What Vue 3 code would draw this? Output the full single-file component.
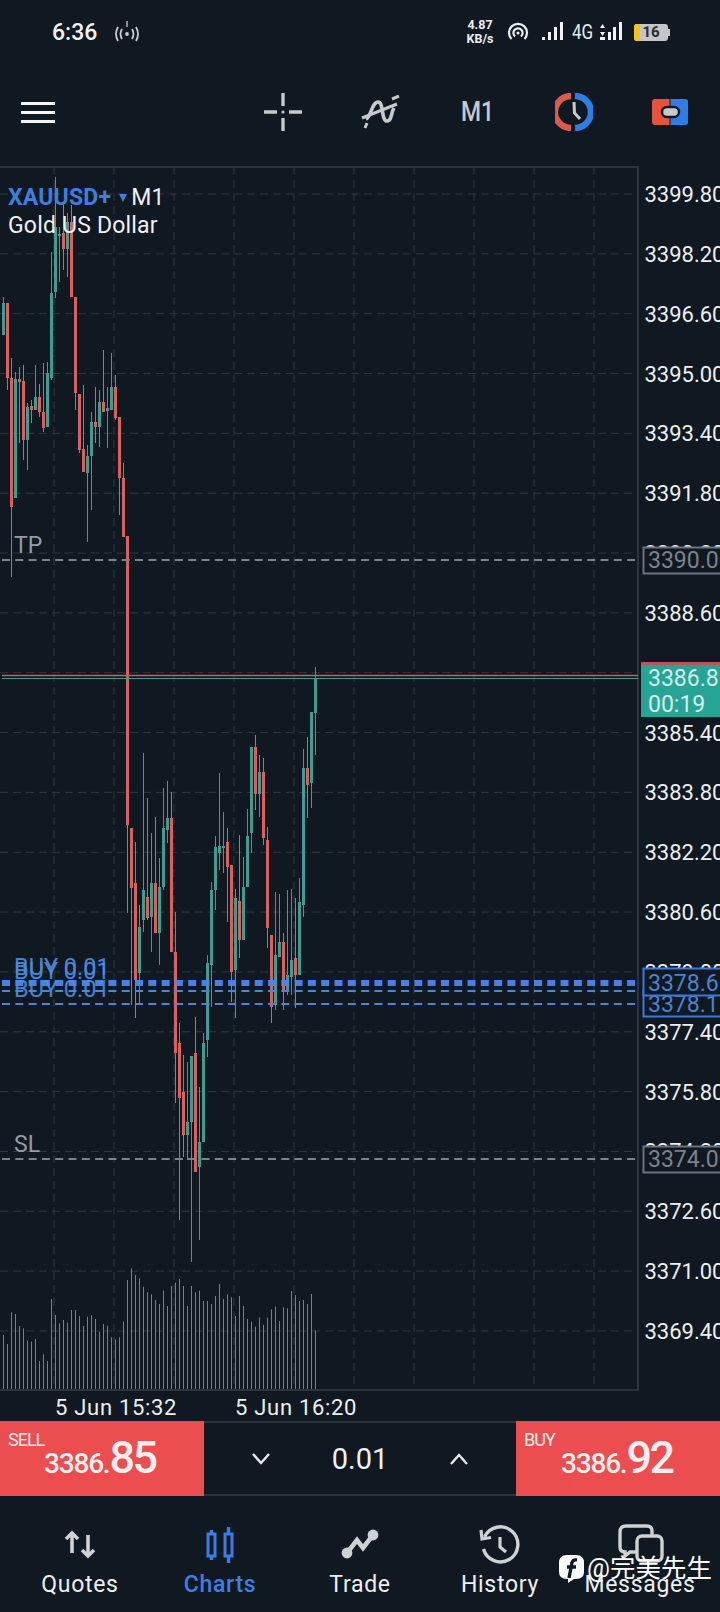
<script setup>
import { computed } from 'vue'

// candle: [bodyTop, bodyBottom, wickTop, wickBottom, up?]
const G = 1
const R = 0
const raw = [
  [303, 335, 297, 335, G], [303, 378, 303, 390, R], [378, 507, 358, 577, R], [379, 498, 372, 498, G],
  [379, 382, 367, 443, R], [381, 440, 365, 460, R], [407, 440, 403, 470, G], [406, 410, 400, 423, R],
  [397, 410, 365, 410, G], [397, 412, 384, 417, R], [412, 428, 363, 432, R], [373, 427, 362, 427, G],
  [293, 378, 252, 380, G], [227, 292, 177, 298, G], [234, 236, 227, 282, G], [233, 249, 203, 270, R],
  [222, 249, 213, 277, G], [222, 297, 205, 297, R], [297, 393, 297, 410, R], [394, 450, 394, 453, R],
  [449, 472, 385, 472, R], [456, 473, 445, 542, G], [422, 456, 412, 510, G], [422, 427, 387, 443, R],
  [402, 427, 390, 447, G], [402, 412, 350, 412, R], [408, 411, 387, 448, G], [387, 410, 353, 410, G],
  [387, 418, 375, 420, R], [417, 478, 417, 515, R], [478, 537, 463, 537, R], [536, 825, 536, 913, R],
  [828, 888, 828, 1005, R], [883, 980, 842, 1018, R], [927, 973, 905, 1005, G], [890, 920, 753, 932, G],
  [897, 918, 798, 920, R], [883, 917, 833, 952, G], [883, 933, 817, 933, R], [887, 933, 858, 965, G],
  [828, 887, 788, 890, G], [818, 830, 781, 843, G], [818, 952, 792, 952, R], [952, 1053, 912, 1103, R],
  [1043, 1098, 1023, 1220, R], [1092, 1135, 1055, 1157, R], [1122, 1135, 1062, 1160, G], [1056, 1122, 1056, 1262, G],
  [1053, 1172, 1017, 1172, R], [1142, 1167, 1087, 1240, G], [1043, 1142, 1033, 1142, G], [963, 1040, 955, 1057, G],
  [890, 965, 882, 1007, G], [847, 890, 836, 910, G], [846, 853, 773, 870, G], [846, 848, 812, 873, G],
  [842, 867, 828, 922, R], [865, 972, 865, 1002, R], [898, 970, 889, 1018, G], [901, 940, 835, 958, R],
  [887, 940, 857, 940, G], [836, 887, 809, 887, G], [747, 833, 747, 853, G], [747, 794, 735, 810, R],
  [772, 794, 755, 817, G], [772, 838, 758, 845, R], [840, 928, 827, 948, R], [935, 1007, 935, 1023, R],
  [955, 1005, 892, 1010, G], [942, 957, 894, 957, G], [942, 992, 933, 1010, R], [975, 990, 890, 995, G],
  [960, 977, 889, 995, G], [958, 975, 898, 1008, R], [902, 975, 878, 975, G], [768, 905, 749, 917, G],
  [768, 785, 737, 818, R], [712, 783, 712, 808, G], [678, 713, 667, 755, G],
]

const candles = computed(() =>
  raw.map((c, i) => ({
    x: 3 + i * 4,
    top: c[0],
    height: Math.max(c[1] - c[0], 2),
    wickTop: c[2],
    wickBottom: c[3],
    color: c[4] === G ? '#3f9c8f' : '#d9605f',
  })),
)

const volTops = [
  285, 312, 217, 222, 258, 265, 302, 305, 297, 363, 343, 363, 177, 225, 250, 240, 248, 210, 210, 228,
  258, 230, 226, 237, 275, 252, 257, 292, 298, 292, 245, 120, 85, 105, 115, 140, 157, 163, 180, 192,
  152, 198, 138, 128, 117, 138, 198, 138, 157, 152, 183, 183, 192, 168, 132, 177, 163, 172, 228, 168,
  198, 237, 245, 260, 232, 255, 233, 208, 200, 243, 202, 205, 153, 165, 183, 180, 192, 162, 272,
]
const volumes = computed(() => volTops.map((v, i) => ({ x: 3 + i * 4, y: 1240 + v / 3 })))

const gridX = Array.from({ length: 10 }, (_, i) => 54 + i * 60)
const gridY = Array.from({ length: 20 }, (_, i) => 194 + i * 59.84)

const priceLabels = computed(() =>
  gridY.map((y, i) => ({ y, text: (3399.8 - i * 1.6).toFixed(2) })),
)
</script>

<template>
  <div class="page">
    <div class="statusbar">
      <span class="clock">6:36</span>
      <svg class="hotspot" width="28" height="26" viewBox="0 0 28 26">
        <path d="M5 8 Q1 15 5 22M9 10 Q6 15 9 20M19 10 Q22 15 19 20M23 8 Q27 15 23 22" fill="none" stroke="#c9cdd1" stroke-width="1.8" />
        <circle cx="14" cy="15" r="1.9" fill="#c9cdd1" />
        <path d="M14 2 V8" stroke="#c9cdd1" stroke-width="1.3" />
      </svg>
      <div class="status-right">
        <div class="speed"><span>4.87</span><span>KB/s</span></div>
        <svg width="22" height="22" viewBox="0 0 22 22" class="wifi">
          <path d="M4.5 18 A9 9 0 1 1 17.5 18M8 15.5 A4.6 4.6 0 1 1 14 15.5" fill="none" stroke="#eceef0" stroke-width="2.2" />
          <circle cx="11" cy="12" r="1.6" fill="#eceef0" />
        </svg>
        <svg width="21" height="20" viewBox="0 0 21 20" class="sig1">
          <rect x="0" y="15" width="3" height="3" fill="#f2f3f4" />
          <rect x="6" y="10" width="3" height="8" fill="#f2f3f4" />
          <rect x="12" y="5" width="3" height="13" fill="#f2f3f4" />
          <rect x="18" y="0" width="3" height="18" fill="#f2f3f4" />
        </svg>
        <span class="net">4G</span>
        <svg width="22" height="20" viewBox="0 0 22 20" class="sig2">
          <path d="M0 6 L2.5 2 L5 6ZM0 10 L2.5 14 L5 10Z" fill="#f2f3f4" />
          <rect x="0" y="15" width="5" height="3" fill="#f2f3f4" />
          <rect x="8" y="10" width="3" height="8" fill="#f2f3f4" />
          <rect x="13" y="5" width="3" height="13" fill="#f2f3f4" />
          <rect x="19" y="0" width="3" height="18" fill="#f2f3f4" />
        </svg>
        <div class="battery"><i class="battery-low"></i><b>16</b></div>
      </div>
    </div>

    <div class="toolbar">
      <div class="burger"><i></i><i></i><i></i></div>
      <svg class="tool-cross" width="38" height="38" viewBox="0 0 38 38">
        <path d="M0 19H13M25 19H38M19 0V13M19 25V38" stroke="#c6cacd" stroke-width="3.4" fill="none" />
        <circle cx="19" cy="19" r="1.6" fill="#c6cacd" />
      </svg>
      <svg class="tool-ind" width="40" height="34" viewBox="0 0 40 34">
        <path d="M5 24 C10 22 11 7 17 7 C23 7 20 26 26 26 C31 26 30 17 33 13" fill="none" stroke="#c6cacd" stroke-width="3.6" />
        <path d="M1 23 L36 9M31 4 L38 1M6 28 L4 33" stroke="#c6cacd" stroke-width="3" fill="none" />
      </svg>
      <span class="tool-m1">M1</span>
      <svg class="tool-clock" width="38" height="38" viewBox="0 0 38 38">
        <path d="M16 3 A16 16 0 0 0 16 35" fill="none" stroke="#d95a4e" stroke-width="6.4" />
        <path d="M20 3 A16 16 0 0 1 20 35" fill="none" stroke="#2f7ee3" stroke-width="6.4" />
        <path d="M19 9 L19.5 20 L25 26" fill="none" stroke="#c6cacd" stroke-width="3" />
      </svg>
      <svg class="tool-mode" width="38" height="28" viewBox="0 0 38 28">
        <path d="M18.5 1H4 Q1 1 1 4V24 Q1 27 4 27H18.5Z" fill="#e5533f" />
        <path d="M19.5 1H34 Q37 1 37 4V24 Q37 27 34 27H19.5Z" fill="#2f7ee8" />
        <rect x="11" y="9" width="17" height="10" rx="5" fill="#c6cacd" stroke="#10181f" stroke-width="2.4" />
      </svg>
    </div>

    <div class="chart">
      <svg class="chart-svg" width="720" height="1261" viewBox="0 160 720 1261">
        <g class="grid">
          <line v-for="x in gridX" :key="'v' + x" :x1="x" :x2="x" y1="167" y2="1390" />
          <line v-for="y in gridY" :key="'h' + y" x1="0" x2="638" :y1="y" :y2="y" />
        </g>

        <line v-for="b in volumes" :key="'b' + b.x" class="vol" :x1="b.x + 0.5" :x2="b.x + 0.5" :y1="b.y" y2="1390" />

        <g v-for="c in candles" :key="c.x">
          <line :x1="c.x + 0.5" :x2="c.x + 0.5" :y1="c.wickTop" :y2="c.wickBottom" :stroke="c.color" stroke-width="1" />
          <rect :x="c.x - 1" :y="c.top" width="3" :height="c.height" :fill="c.color" />
        </g>

        <path class="frame" d="M0 167H638V1390H0" />

        <line class="price-red" x1="2" x2="638" y1="675.5" y2="675.5" />
        <line class="price-green" x1="2" x2="638" y1="678.5" y2="678.5" />

        <line class="level" x1="2" x2="638" y1="560" y2="560" />
        <line class="level" x1="2" x2="638" y1="1159" y2="1159" />
        <line class="order-thick" x1="2" x2="638" y1="983" y2="983" />
        <line class="order" x1="2" x2="638" y1="991" y2="991" />
        <line class="order" x1="2" x2="638" y1="1004" y2="1004" />

        <text class="tag" x="14" y="553">TP</text>
        <text class="tag" x="14" y="1152">SL</text>
        <text class="buy-tag" x="14" y="975">BUY 0.01</text>
        <text class="buy-tag" x="14" y="979">BUY 0.01</text>
        <text class="buy-tag" x="14" y="997">BUY 0.01</text>

        <text v-for="p in priceLabels" :key="p.text" class="axis" x="644.5" :y="p.y + 8">{{ p.text }}</text>

        <rect class="box-grey" x="643.5" y="547.5" width="90" height="26" />
        <text class="axis boxed grey" x="648" y="568">3390.00</text>

        <rect x="641" y="662" width="79" height="4" fill="#b25a5a" />
        <rect x="641" y="665" width="79" height="52" fill="#26a596" />
        <text class="axis boxed pale" x="648" y="686">3386.85</text>
        <text class="axis boxed pale" x="648" y="712">00:19</text>

        <rect class="box-blue" x="643.5" y="990.5" width="90" height="26" />
        <text class="axis boxed blue" x="648" y="1012">3378.15</text>
        <rect class="box-blue" x="643.5" y="968.5" width="90" height="27" />
        <text class="axis boxed blue" x="648" y="991">3378.65</text>

        <rect class="box-grey" x="643.5" y="1146.5" width="90" height="26" />
        <text class="axis boxed grey" x="648" y="1167">3374.00</text>

        <text class="time" x="55" y="1415">5 Jun 15:32</text>
        <text class="time" x="235" y="1415">5 Jun 16:20</text>
      </svg>

      <div class="legend">
        <div class="legend-row">
          <b class="symbol">XAUUSD+</b>
          <i class="caret"></i>
          <span>M1</span>
        </div>
        <div class="legend-row">Gold US Dollar</div>
      </div>
    </div>

    <div class="trade">
      <div class="side">
        <span class="side-label">SELL</span>
        <div class="side-price sell-price"><span class="small">3386.</span><span class="big">85</span></div>
      </div>
      <div class="lot">
        <svg width="20" height="14" viewBox="0 0 20 14"><path d="M2 2 L10 11 L18 2" fill="none" stroke="#e8eaec" stroke-width="2.4" /></svg>
        <span class="lot-value">0.01</span>
        <svg width="20" height="14" viewBox="0 0 20 14"><path d="M2 12 L10 3 L18 12" fill="none" stroke="#e8eaec" stroke-width="2.4" /></svg>
      </div>
      <div class="side">
        <span class="side-label">BUY</span>
        <div class="side-price buy-price"><span class="small">3386.</span><span class="big">92</span></div>
      </div>
    </div>

    <div class="nav">
      <div class="nav-item">
        <svg class="nav-icon" width="44" height="44" viewBox="0 0 44 44">
          <path d="M14 30V10M8 16L14 10L20 16M30 12V33M24 27L30 33L36 27" fill="none" stroke="#cfd2d5" stroke-width="3.6" />
        </svg>
        <span>Quotes</span>
      </div>
      <div class="nav-item active">
        <svg class="nav-icon" width="44" height="44" viewBox="0 0 44 44">
          <g fill="none" stroke="#3b7de6" stroke-width="3">
            <rect x="10" y="11" width="7" height="22" />
            <rect x="27" y="11" width="7" height="22" />
          </g>
          <path d="M13.5 7V11M13.5 33V37M30.5 4V11M30.5 33V40" stroke="#3b7de6" stroke-width="3.4" />
        </svg>
        <span>Charts</span>
      </div>
      <div class="nav-item">
        <svg class="nav-icon" width="44" height="44" viewBox="0 0 44 44">
          <path d="M9 30L19 17L25 25L35 12" fill="none" stroke="#cfd2d5" stroke-width="4.6" />
          <circle cx="9" cy="30" r="5.4" fill="#cfd2d5" />
          <circle cx="35" cy="12" r="5.4" fill="#cfd2d5" />
        </svg>
        <span>Trade</span>
      </div>
      <div class="nav-item">
        <svg class="nav-icon" width="44" height="44" viewBox="0 0 44 44">
          <path d="M6.5 14 A17.5 17.5 0 1 1 5.5 26" fill="none" stroke="#cfd2d5" stroke-width="3.4" />
          <path d="M3 7 L4 16 L13 14.5" fill="none" stroke="#cfd2d5" stroke-width="3.2" />
          <path d="M22 14V24L28 29" fill="none" stroke="#cfd2d5" stroke-width="3.2" />
        </svg>
        <span>History</span>
      </div>
      <div class="nav-item">
        <svg class="nav-icon" width="44" height="44" viewBox="0 0 44 44">
          <path d="M34 13V8 Q34 3 29 3H8 Q2 3 2 9V24 Q2 29 7 29V33L12 29H19" fill="none" stroke="#cfd2d5" stroke-width="3.4" />
          <rect x="19" y="13" width="25" height="25" rx="5" fill="#101821" stroke="#cfd2d5" stroke-width="3.4" />
        </svg>
        <span>Messages</span>
      </div>

      <div class="watermark">
        <svg width="25" height="28" viewBox="0 0 25 28">
          <path d="M8 0H17 Q25 0 25 8V17 Q25 24 17 24H15 L9 28 L9 24 H8 Q0 24 0 17V8 Q0 0 8 0Z" fill="#fff" />
          <path d="M18 5 Q13 4 12.5 10 L10 23M8 12H17" fill="none" stroke="#101821" stroke-width="3.4" />
        </svg>
        <span>@完美先生</span>
      </div>
    </div>
  </div>
</template>

<style>
html,
body {
  margin: 0;
  background: #101821;
}
</style>

<style scoped>
.page {
  position: relative;
  width: 720px;
  height: 1612px;
  overflow: hidden;
  background: #101821;
  color: #f0f1f2;
  font-family: Roboto, 'Noto Sans CJK SC', sans-serif;
}

.statusbar {
  display: flex;
  align-items: center;
  height: 64px;
  padding: 0 52px 0 52px;
  box-sizing: border-box;
}
.clock {
  font-size: 23px;
  font-weight: 500;
  color: #f4f5f6;
}
.hotspot {
  margin-left: 16px;
}
.status-right {
  display: flex;
  align-items: center;
  margin-left: auto;
}
.speed {
  display: flex;
  flex-direction: column;
  align-items: center;
  width: 28px;
  font-size: 12.5px;
  font-weight: 700;
  line-height: 14px;
  color: #eceef0;
}
.wifi {
  margin-left: 13px;
}
.sig1 {
  margin-left: 13px;
}
.net {
  margin-left: 9px;
  font-size: 20px;
  color: #eceef0;
  transform: scaleX(0.85);
  transform-origin: left center;
  width: 20px;
}
.sig2 {
  margin-left: 8px;
}
.battery {
  position: relative;
  display: flex;
  align-items: center;
  justify-content: center;
  width: 34px;
  height: 17px;
  margin-left: 12px;
  border-radius: 3px;
  background: #c4c5c6;
  color: #2a2c2e;
  font-size: 15px;
}
.battery::after {
  content: '';
  position: absolute;
  right: -2px;
  top: 5px;
  width: 2px;
  height: 7px;
  background: #c4c5c6;
}
.battery b {
  position: relative;
  font-weight: 700;
}
.battery-low {
  position: absolute;
  left: 0;
  top: 0;
  bottom: 0;
  width: 6px;
  border-radius: 3px 0 0 3px;
  background: #f4c21f;
}

.toolbar {
  display: flex;
  align-items: center;
  height: 96px;
  padding: 0 30px 0 21px;
  box-sizing: border-box;
}
.burger {
  display: flex;
  flex-direction: column;
  gap: 6px;
  width: 34px;
}
.burger i {
  display: block;
  height: 3px;
  background: #f4f5f6;
}
.tool-cross {
  margin-left: 209px;
}
.tool-ind {
  margin-left: 59px;
}
.tool-m1 {
  margin-left: 60px;
  width: 32px;
  font-size: 27px;
  font-weight: 500;
  color: #c6cacd;
  transform: scaleX(0.85);
  transform-origin: left center;
}
.tool-clock {
  margin-left: 62px;
}
.tool-mode {
  margin-left: 58px;
}

.chart {
  position: relative;
  height: 1261px;
}
.chart-svg {
  display: block;
}
.grid line {
  stroke: #2f3741;
  stroke-width: 1;
  stroke-dasharray: 8 5;
}
.vol {
  stroke: #3f9c92;
  stroke-width: 1;
}
.frame {
  fill: none;
  stroke: #2b333d;
  stroke-width: 2;
}
.price-red {
  stroke: #c85a68;
  stroke-width: 1.5;
}
.price-green {
  stroke: #3f9c8f;
  stroke-width: 1;
}
.level {
  stroke: #7b838b;
  stroke-width: 2;
  stroke-dasharray: 8 5.3;
}
.order-thick {
  stroke: #4788f0;
  stroke-width: 6;
  stroke-dasharray: 8 5.3;
  opacity: 0.95;
}
.order {
  stroke: #4d84d8;
  stroke-width: 2;
  stroke-dasharray: 8 5.3;
}
.tag {
  font-size: 23px;
  fill: #969ca3;
}
.buy-tag {
  font-size: 23.5px;
  fill: #4b8fe0;
  opacity: 0.9;
}
.axis {
  font-size: 22px;
  fill: #eef0f1;
}
.axis.boxed {
  font-size: 23px;
}
.axis.grey {
  fill: #7b838c;
}
.axis.blue {
  fill: #4a83cf;
}
.axis.pale {
  fill: #d6f1ec;
}
.box-grey {
  fill: #101821;
  stroke: #6b7380;
  stroke-width: 2;
}
.box-blue {
  fill: #101821;
  stroke: #3a79dc;
  stroke-width: 2;
}
.time {
  font-size: 22px;
  letter-spacing: 0.7px;
  fill: #eef0f1;
}

.legend {
  position: absolute;
  left: 8px;
  top: 24px;
  font-size: 23px;
  letter-spacing: 0.2px;
  line-height: 28px;
  color: #f0f1f2;
}
.legend-row {
  display: flex;
  align-items: center;
}
.symbol {
  font-weight: 700;
  color: #3e7fdc;
}
.caret {
  width: 0;
  height: 0;
  margin: 0 4px 0 8px;
  border-left: 4px solid transparent;
  border-right: 4px solid transparent;
  border-top: 8px solid #3e7fdc;
}

.trade {
  display: flex;
  height: 75px;
}
.side {
  display: flex;
  flex-direction: column;
  width: 204px;
  padding: 9px 0 0 8px;
  box-sizing: border-box;
  background: #ec4e50;
  color: #fbeeee;
}
.side-label {
  font-size: 18px;
  line-height: 20px;
  letter-spacing: -1px;
}
.side-price {
  display: flex;
  align-items: baseline;
  margin-top: -19px;
  font-weight: 500;
}
.sell-price {
  margin-left: 36px;
}
.buy-price {
  margin-left: 37px;
}
.small {
  font-size: 28px;
  letter-spacing: -1.2px;
}
.big {
  font-size: 45px;
  line-height: 54px;
  letter-spacing: -2.5px;
}
.lot {
  flex: 1;
  display: flex;
  align-items: center;
  justify-content: space-between;
  padding: 0 47px;
  border-top: 2px solid #2b333d;
  border-bottom: 2px solid #2b333d;
}
.lot-value {
  font-size: 29px;
  color: #eef0f1;
}

.nav {
  position: relative;
  display: flex;
  padding: 27px 10px 0;
}
.nav-item {
  flex: 1;
  display: flex;
  flex-direction: column;
  align-items: center;
  font-size: 23px;
  line-height: 30px;
  letter-spacing: 0.7px;
  color: #eef0f1;
}
.nav-item.active {
  color: #3f7fe0;
  font-weight: 500;
}
.nav-icon {
  overflow: visible;
  margin-bottom: 3px;
}
.watermark {
  position: absolute;
  left: 559px;
  top: 59px;
  display: flex;
  align-items: flex-start;
  gap: 3px;
  font-size: 25.5px;
  line-height: 26px;
  color: #fff;
}
</style>
